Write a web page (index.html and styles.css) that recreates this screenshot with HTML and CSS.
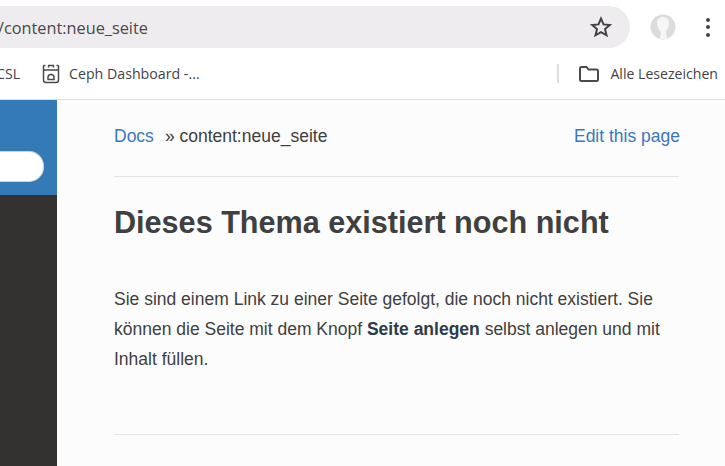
FILE: index.html
```html
<!DOCTYPE html>
<html>
<head>
<meta charset="utf-8">
<title>content:neue_seite</title>
<link rel="stylesheet" href="styles.css">
</head>
<body>
<div class="chrome">
    <div class="toolbar">
        <div class="omnibox">
            <span class="url">/content:neue_seite</span>
            <svg class="star" width="24" height="24" viewBox="0 0 24 24"><path d="M12 3.6l2.5 5.8 6.3.6-4.8 4.1 1.5 6.2L12 17.1l-5.5 3.2L8 14.1 3.200 10l6.300-.6z" fill="none" stroke="#444" stroke-width="2" stroke-linejoin="miter"/></svg>
        </div>
        <div class="avatar">
            <svg width="26" height="26" viewBox="0 0 26 26"><circle cx="13" cy="13" r="12.500" fill="#dcdcdc"/><path d="M7 9c0-4 3-6 6-6s6 2 6 6c0 4-2 7-3 9 0 2 1 4 1 7H10c0-3 1-5 1-7-2-2-4-5-4-9z" fill="#f6f6f6"/></svg>
        </div>
        <div class="menu-dots"><i></i><i></i><i></i></div>
    </div>
    <div class="bookmarks">
        <span class="bm-clipped">CSL</span>
        <span class="bm">
            <svg width="20" height="20" viewBox="0 0 20 20" fill="none" stroke="#4a4a4a" stroke-width="1.500"><path d="M2.500 1.500v4.500h15V1.500M7.500 1.500v2M12.500 1.500v2M2.500 1.500h2M7 1.500h6M15.500 1.500h2M2.500 6v10a2.500 2.500 0 0 0 2.500 2.500h10a2.500 2.500 0 0 0 2.500-2.500V6"/><path d="M7 15.500v-2a3 3 0 0 1 6 0v2z"/></svg>
            Ceph Dashboard -...
        </span>
        <span class="bm-sep"></span>
        <span class="bm all-marks">
            <svg width="22" height="18" viewBox="0 0 22 18" fill="none" stroke="#4a4a4a" stroke-width="2"><path d="M2 3.500a1.500 1.500 0 0 1 1.500-1.500h5l2 2.500h8a1.500 1.500 0 0 1 1.500 1.500v8.500a1.500 1.500 0 0 1-1.500 1.500h-15A1.500 1.500 0 0 1 2 14.500z"/></svg>
            Alle Lesezeichen
        </span>
    </div>
</div>
<div class="page">
    <div class="sidebar">
        <div class="side-top"><div class="search"></div></div>
    </div>
    <div class="content">
        <div class="crumbs">
            <div><a href="#">Docs</a><span class="here">&raquo; content:neue_seite</span></div>
            <a class="edit" href="#">Edit this page</a>
        </div>
        <hr>
        <h1>Dieses Thema existiert noch nicht</h1>
        <p>Sie sind einem Link zu einer Seite gefolgt, die noch nicht existiert. Sie können die Seite mit dem Knopf <b>Seite anlegen</b> selbst anlegen und mit Inhalt füllen.</p>
        <hr>
    </div>
</div>
</body>
</html>
```

FILE: styles.css
```css
html, body {
    margin: 0;
    height: 100%;
    overflow: hidden;
}
body {
    display: flex;
    flex-direction: column;
    font-family: "Liberation Sans", Arial, sans-serif;
    background-color: #fcfcfc;
}
.chrome {
    background-color: white;
    font-family: "Open Sans", sans-serif;
    color: #45434a;
    border-bottom: 1px solid #e0e0e0;
    height: 99px;
    flex: none;
}
.toolbar {
    display: flex;
    align-items: center;
    height: 42px;
    padding-top: 6px;
}
.omnibox {
    width: 630px;
    height: 42px;
    flex: none;
    display: flex;
    align-items: center;
    justify-content: space-between;
    background-color: #eeecee;
    border-radius: 0 21px 21px 0;
    padding-right: 17px;
    box-sizing: border-box;
    overflow: hidden;
}
.url {
    margin-left: -2px;
    padding-top: 1px;
    font-size: 16.300px;
    color: #4a484c;
}
.avatar {
    margin-left: 20px;
    height: 26px;
}
.menu-dots {
    margin-left: 30px;
    display: flex;
    flex-direction: column;
    gap: 3.500px;
}
.menu-dots i {
    display: block;
    width: 4px;
    height: 4px;
    border-radius: 50%;
    background-color: #444;
}
.bookmarks {
    display: flex;
    align-items: center;
    height: 47px;
    margin-top: 2px;
    font-size: 14.200px;
    overflow: hidden;
}
.bm-clipped {
    margin-left: -4px;
    width: 24px;
    flex: none;
}
.bm {
    display: flex;
    align-items: center;
    gap: 8px;
    white-space: nowrap;
}
.bookmarks .bm:nth-child(2) {
    margin-left: 21px;
}
.bm-sep {
    width: 2px;
    height: 19px;
    background-color: #dedede;
    margin-left: auto;
}
.all-marks {
    margin-left: 19px;
    margin-right: 7px;
    gap: 10px;
    font-size: 14.100px;
}
.page {
    flex: 1;
    display: flex;
}
.sidebar {
    width: 57px;
    flex: none;
    background-color: #343131;
}
.side-top {
    height: 95px;
    background-color: #337ab7;
    padding-top: 51px;
    box-sizing: border-box;
}
.search {
    width: 44px;
    height: 31px;
    background-color: white;
    border: 1px solid #d0d4d8;
    border-left: 0;
    border-radius: 0 15px 15px 0;
    box-sizing: border-box;
}
.content {
    width: 565px;
    padding: 25px 0 0 57px;
    color: #404040;
    font-size: 17.500px;
}
.crumbs {
    display: flex;
    justify-content: space-between;
    line-height: 22px;
}
a {
    color: #3a78bd;
    text-decoration: none;
}
.edit {
    margin-right: -1px;
}
.here {
    margin-left: 11px;
}
hr {
    border: 0;
    border-top: 1px solid #e1e4e5;
    margin: 29px 0 0;
}
h1 {
    font-size: 30.600px;
    line-height: 36px;
    margin: 27px 0 0;
    color: #404040;
}
p {
    margin: 44px 0 60px;
    line-height: 30px;
}
b {
    color: #2f3b46;
}
```
